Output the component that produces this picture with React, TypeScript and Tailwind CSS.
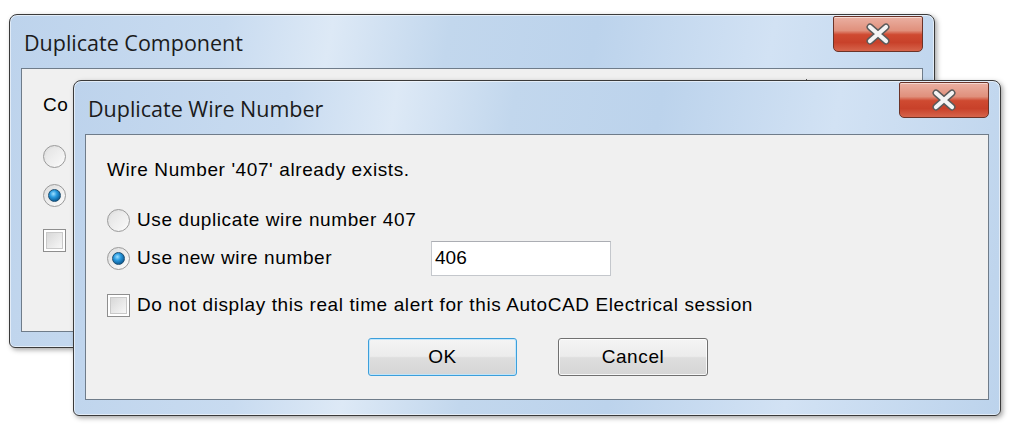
import React from "react";

const body = "font-['Liberation_Sans',Arial,sans-serif] text-[19px] tracking-[0.6px] text-black";
const title = "font-['Open_Sans','Noto_Sans',sans-serif] text-[21.5px] text-[#1b1b1b]";

function CloseButton() {
  return (
    <div className="flex h-[36px] w-[90px] items-center justify-center rounded-b-[5px] rounded-t-[2px] border border-[#6b3328] bg-[linear-gradient(180deg,#eab0a2_0%,#e0907c_40%,#cf4a31_52%,#c8412a_75%,#d6644b_100%)] shadow-[inset_0_1px_0_rgba(255,255,255,0.5)]">
      <svg width="26" height="22" viewBox="0 0 26 22" aria-hidden>
        <path d="M5 4 L21 18 M21 4 L5 18" stroke="#5a5a5a" strokeWidth="7" strokeLinecap="round" />
        <path d="M5 4 L21 18 M21 4 L5 18" stroke="#f4f4f4" strokeWidth="4.2" strokeLinecap="round" />
      </svg>
    </div>
  );
}

function Radio({ checked }: { checked?: boolean }) {
  return (
    <div className="flex h-[23px] w-[23px] shrink-0 items-center justify-center rounded-full border border-[#9a9a9a] bg-[linear-gradient(135deg,#dcdcdc,#fdfdfd)]">
      {checked ? (
        <div className="h-[13px] w-[13px] rounded-full border border-[#1c4f73] bg-[radial-gradient(circle_at_40%_35%,#9fe0ff_0%,#2a9be0_35%,#0c5d98_75%,#083d66_100%)]" />
      ) : (
        <div className="h-[17px] w-[17px] rounded-full bg-[linear-gradient(135deg,#e4e4e4,#f8f8f8)]" />
      )}
    </div>
  );
}

function Checkbox() {
  return (
    <div className="flex h-[23px] w-[23px] shrink-0 items-center justify-center border border-[#8e8e8e] bg-white">
      <div className="h-[17px] w-[17px] border border-[#c9c9c9] bg-[linear-gradient(135deg,#d8d8d8,#f7f7f7)]" />
    </div>
  );
}

function Frame({ heading, children }: { heading: string; children: React.ReactNode }) {
  return (
    <div className="relative flex h-full w-full flex-col rounded-t-[8px] rounded-b-[6px] border border-[#3a3a3a] bg-[linear-gradient(100deg,#bdd3ec_0%,#c8dbf0_22%,#dde9f6_33%,#c2d7ed_45%,#bcd3ec_60%,#d2e2f4_78%,#bcd3ec_100%)] px-[11px] pb-[15px] shadow-[inset_0_0_0_1px_rgba(255,255,255,0.55),2px_2px_5px_rgba(0,0,0,0.35)]">
      <div className={`flex h-[53px] shrink-0 items-center pl-[3px] pt-[4px] ${title}`}>{heading}</div>
      <div className="absolute right-[11px] top-[1px]">
        <CloseButton />
      </div>
      <div className="flex-1 border border-[#6f7c8a] bg-[#f0f0f0]">{children}</div>
    </div>
  );
}

export default function App() {
  return (
    <div className="relative h-[429px] w-[1009px] overflow-hidden bg-white">
      {/* back window, mostly hidden under the front one */}
      <div className="absolute left-[9px] top-[14px] h-[334px] w-[926px]">
        <Frame heading="Duplicate Component">
          <div className={`relative h-full pl-[21px] pt-[24px] ${body}`}>
            <div className="absolute right-[115px] top-[10px] h-[2px] w-px bg-[#555]" />
            <div className="flex h-[24px] items-center">Co</div>
            <div className="mt-[27px] flex h-[24px] items-center">
              <Radio />
            </div>
            <div className="mt-[15px] flex h-[24px] items-center">
              <Radio checked />
            </div>
            <div className="mt-[21px] flex h-[24px] items-center">
              <Checkbox />
            </div>
          </div>
        </Frame>
      </div>

      {/* front window */}
      <div className="absolute left-[73px] top-[80px] h-[336px] w-[928px]">
        <Frame heading="Duplicate Wire Number">
          <div className={`flex h-full flex-col pl-[21px] pt-[23px] ${body}`}>
            <div className="flex h-[24px] items-center">Wire Number '407' already exists.</div>
            <div className="mt-[26px] flex h-[24px] items-center gap-[7px]">
              <Radio />
              <span>Use duplicate wire number 407</span>
            </div>
            <div className="mt-[9px] flex h-[35px] items-center">
              <Radio checked />
              <span className="ml-[7px] w-[294px]">Use new wire number</span>
              <div className="flex h-[35px] w-[180px] items-center border border-[#c4c7cc] border-t-[#abadb3] bg-white pl-[3px] tracking-normal">
                406
              </div>
            </div>
            <div className="mt-[17px] flex h-[24px] items-center gap-[7px]">
              <Checkbox />
              <span>Do not display this real time alert for this AutoCAD Electrical session</span>
            </div>
            <div className="ml-[261px] mt-[21px] flex gap-[41px]">
              <button className="flex h-[38px] w-[149px] items-center justify-center rounded-[3px] border border-[#3c9fdb] bg-[linear-gradient(180deg,#f4f4f4_0%,#ececec_48%,#dedede_52%,#d5d5d5_100%)] shadow-[inset_0_0_0_1px_rgba(190,230,253,0.9)]">
                OK
              </button>
              <button className="flex h-[38px] w-[150px] items-center justify-center rounded-[3px] border border-[#707070] bg-[linear-gradient(180deg,#f4f4f4_0%,#ececec_48%,#dedede_52%,#d5d5d5_100%)] shadow-[inset_0_0_0_1px_rgba(255,255,255,0.8)]">
                Cancel
              </button>
            </div>
          </div>
        </Frame>
      </div>
    </div>
  );
}
